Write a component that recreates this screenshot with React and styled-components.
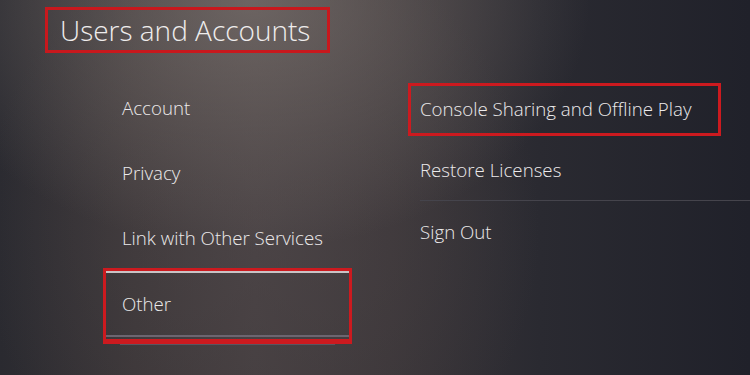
import React from 'react';
import styled, { createGlobalStyle } from 'styled-components';

const GlobalStyle = createGlobalStyle`
  html, body {
    margin: 0;
    padding: 0;
    background: #26252b;
  }
  * {
    box-sizing: border-box;
  }
`;

const Screen = styled.div`
  width: 750px;
  height: 375px;
  overflow: hidden;
  padding-top: 7px;
  font-family: 'Open Sans', 'Noto Sans', sans-serif;
  color: #e8e6e7;
  background:
    radial-gradient(ellipse 340px 250px at 250px 0px, rgba(125, 116, 112, 0.7), rgba(125, 116, 112, 0) 100%),
    radial-gradient(ellipse 280px 300px at 260px 230px, rgba(80, 72, 74, 0.6), rgba(80, 72, 74, 0) 100%),
    linear-gradient(90deg, #2a2a30 0%, #3a3537 18%, #433d3f 34%, #3a3538 52%, #2a2a31 72%, #20212a 100%);
`;

const Header = styled.div`
  margin-left: 45px;
  width: 285px;
  height: 46px;
  border: 3px solid #c8181d;
  display: flex;
  align-items: center;
  padding-left: 12px;
`;

const Title = styled.h1`
  margin: 0;
  font-size: 28px;
  font-weight: 300;
  line-height: 1;
  color: #efeded;
`;

const Columns = styled.div`
  display: flex;
  gap: 70px;
  margin-top: 23px;
  padding-left: 106px;
`;

const Column = styled.ul`
  list-style: none;
  margin: ${({ offset }) => offset || 0}px 0 0;
  padding: 0;
  width: ${({ width }) => width}px;
  display: flex;
  flex-direction: column;
`;

const Item = styled.li`
  position: relative;
  height: ${({ height }) => height}px;
  display: flex;
  align-items: center;
  padding: 0 0 2px ${({ indent }) => indent || 0}px;
  font-size: 18.7px;
  font-weight: 300;
  color: #eceaeb;
  border-top: ${({ focused }) => (focused ? '2px solid #c9c3c5' : 'none')};
  border-bottom: ${({ focused, divided }) =>
    focused ? '2px solid #6c6570' : divided ? '1px solid #45444c' : 'none'};
`;

/* red annotation frame drawn over an item */
const Highlight = styled.span`
  position: absolute;
  top: ${({ inset }) => inset[0]}px;
  right: ${({ inset }) => inset[1]}px;
  bottom: ${({ inset }) => inset[2]}px;
  left: ${({ inset }) => inset[3]}px;
  border: 3px solid #cc1a1f;
  border-bottom-width: ${({ thick }) => (thick ? 5 : 3)}px;
  pointer-events: none;
`;

const Shadow = styled.span`
  position: absolute;
  left: 14px;
  right: 15px;
  bottom: -10px;
  height: 1px;
  background: #5b5560;
`;

const left = ['Account', 'Privacy', 'Link with Other Services'];

const App = () => (
  <>
    <GlobalStyle />
    <Screen>
      <Header>
        <Title>Users and Accounts</Title>
      </Header>
      <Columns>
        <Column width={244}>
          {left.map((label) => (
            <Item key={label} height={65} indent={16}>
              {label}
            </Item>
          ))}
          <Item height={66} indent={16} focused>
            Other
            <Highlight inset={[-5, -2, -9, -3]} thick />
            <Shadow />
          </Item>
        </Column>
        <Column width={330} offset={2}>
          <Item height={62}>
            Console Sharing and Offline Play
            <Highlight inset={[5, 29, 4, -12]} />
          </Item>
          <Item height={61} divided>
            Restore Licenses
          </Item>
          <Item height={62}>Sign Out</Item>
        </Column>
      </Columns>
    </Screen>
  </>
);

export default App;
